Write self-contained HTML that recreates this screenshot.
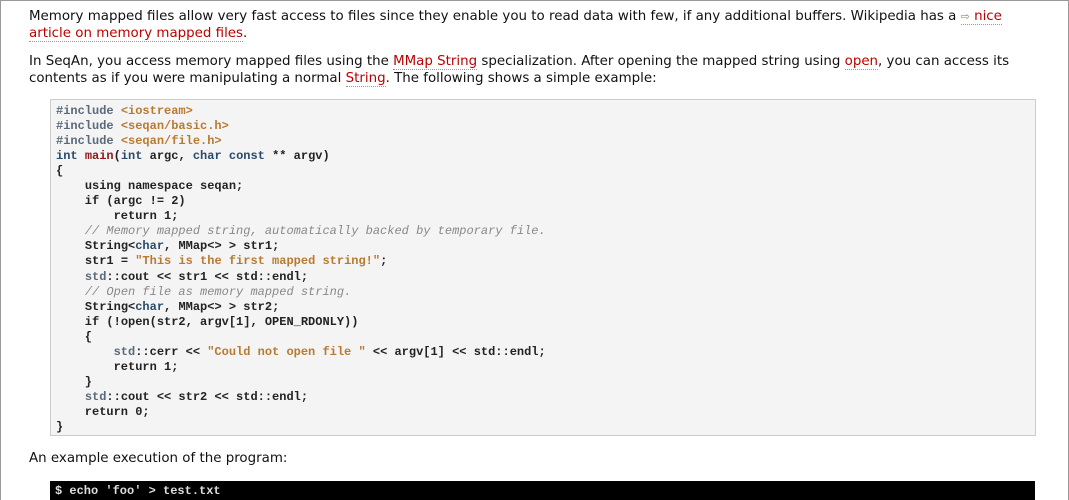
<!DOCTYPE html>
<html><head><meta charset="utf-8"><style>
html,body{margin:0;padding:0;background:#fff;overflow:hidden;}
body{width:1069px;height:500px;position:relative;font-family:"DejaVu Sans","Liberation Sans",sans-serif;font-size:13.4px;color:#111;}
.frame{position:absolute;left:0;top:0;width:1067px;height:499px;border:1px solid #999;border-bottom:none;}
p{position:absolute;left:29px;width:1010px;margin:0;line-height:16.5px;}
a{color:#b00;text-decoration:none;border-bottom:1px dotted #999;}
.ext{color:#7a9a5a;font-size:11px;}
pre{position:absolute;left:50px;top:99px;width:986px;height:337px;margin:0;background:#f4f4f4;border:1px solid #ccc;font-family:"Liberation Mono",monospace;font-size:12px;line-height:15.05px;padding:4px 0 0 5px;box-sizing:border-box;color:#222;font-weight:bold;}
.pp{color:#5a6a7a}.inc{color:#b87a30}.kw{color:#2b4a6a}.fn{color:#8b1a1a}.st{color:#b87a30}.cm{color:#888;font-style:italic;font-weight:normal}.n{color:#222}
.term{position:absolute;left:50px;top:481px;width:985px;height:19px;background:#000;color:#ddd;font-family:"Liberation Mono",monospace;font-size:12px;font-weight:bold;padding:3px 0 0 5px;box-sizing:border-box;}
</style></head><body>
<div class="frame"></div>
<p style="top:9px">Memory mapped files allow very fast access to files since they enable you to read data with few, if any additional buffers. Wikipedia has a <a href="#"><span class="ext">⇨</span> nice article on memory mapped files</a>.</p>
<p style="top:54px">In SeqAn, you access memory mapped files using the <a href="#">MMap String</a> specialization. After opening the mapped string using <a href="#">open</a>, you can access its contents as if you were manipulating a normal <a href="#">String</a>. The following shows a simple example:</p>
<pre><span class="pp">#include</span> <span class="inc">&lt;iostream&gt;</span>
<span class="pp">#include</span> <span class="inc">&lt;seqan/basic.h&gt;</span>
<span class="pp">#include</span> <span class="inc">&lt;seqan/file.h&gt;</span>
<span class="kw">int</span> <span class="fn">main</span><span class="n">(</span><span class="kw">int</span> <span class="n">argc,</span> <span class="kw">char const</span> <span class="n">** argv)</span>
{
    <span class="n">using namespace seqan;</span>
    if <span class="n">(argc != 2)</span>
        return <span class="n">1;</span>
    <span class="cm">// Memory mapped string, automatically backed by temporary file.</span>
    <span class="n">String&lt;</span><span class="kw">char</span><span class="n">, MMap&lt;&gt; &gt; str1;</span>
    <span class="n">str1 = </span><span class="st">"This is the first mapped string!"</span><span class="n">;</span>
    <span class="pp">std</span><span class="n">::cout &lt;&lt; str1 &lt;&lt; std::endl;</span>
    <span class="cm">// Open file as memory mapped string.</span>
    <span class="n">String&lt;</span><span class="kw">char</span><span class="n">, MMap&lt;&gt; &gt; str2;</span>
    if <span class="n">(!open(str2, argv[1], OPEN_RDONLY))</span>
    {
        <span class="pp">std</span><span class="n">::cerr &lt;&lt; </span><span class="st">"Could not open file "</span><span class="n"> &lt;&lt; argv[1] &lt;&lt; std::endl;</span>
        return <span class="n">1;</span>
    }
    <span class="pp">std</span><span class="n">::cout &lt;&lt; str2 &lt;&lt; std::endl;</span>
    return <span class="n">0;</span>
}</pre>
<p style="top:451px">An example execution of the program:</p>
<div class="term">$ echo 'foo' &gt; test.txt</div>
</body></html>
